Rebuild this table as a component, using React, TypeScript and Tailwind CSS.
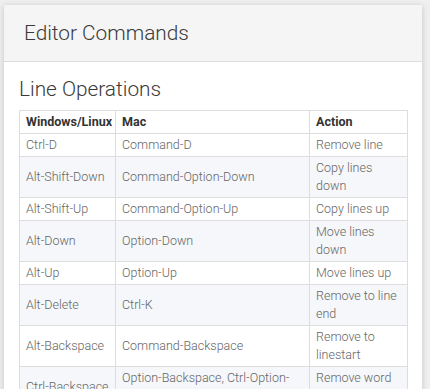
import React from "react";

const rows: [string, string, string][] = [
  ["Ctrl-D", "Command-D", "Remove line"],
  ["Alt-Shift-Down", "Command-Option-Down", "Copy lines down"],
  ["Alt-Shift-Up", "Command-Option-Up", "Copy lines up"],
  ["Alt-Down", "Option-Down", "Move lines down"],
  ["Alt-Up", "Option-Up", "Move lines up"],
  ["Alt-Delete", "Ctrl-K", "Remove to line end"],
  ["Alt-Backspace", "Command-Backspace", "Remove to linestart"],
  ["Ctrl-Backspace", "Option-Backspace, Ctrl-Option-Backspace", "Remove word left"],
  ["Ctrl-Delete", "Option-Delete", "Remove word right"],
];

export default function App() {
  return (
    <div
      className="min-h-[389px] bg-[#efefef] pt-[5px] pl-[4px] overflow-hidden"
      style={{ fontFamily: "Roboto, 'Liberation Sans', sans-serif" }}
    >
      <div className="w-[418px] bg-white shadow-[0_1px_6px_rgba(0,0,0,0.18)]">
        <div className="h-[57px] bg-[#f5f5f5] border-b border-[#dddddd] flex items-center pl-[20px]">
          <h2 className="text-[20.8px] font-light text-[#3a3a3a] leading-[28px]">Editor Commands</h2>
        </div>
        <div className="px-[15px] pt-[13px] pb-4">
          <h3 className="text-[20.8px] font-light text-[#3a3a3a] leading-[28px] mb-[7px]">Line Operations</h3>
          <table className="w-[388px] table-fixed border-collapse text-[12.5px] leading-[18px]">
            <colgroup>
              <col className="w-[96px]" />
              <col className="w-[194px]" />
              <col className="w-[98px]" />
            </colgroup>
            <thead>
              <tr>
                <th className="border border-[#dddddd] px-[6px] py-[2px] text-left font-bold text-[#333333]">Windows/Linux</th>
                <th className="border border-[#dddddd] px-[6px] py-[2px] text-left font-bold text-[#333333]">Mac</th>
                <th className="border border-[#dddddd] px-[6px] py-[2px] text-left font-bold text-[#333333]">Action</th>
              </tr>
            </thead>
            <tbody>
              {rows.map((r, i) => (
                <tr key={i} className={i % 2 === 1 ? "bg-[#f5f7fa]" : "bg-white"}>
                  {r.map((c, j) => (
                    <td key={j} className="border border-[#dddddd] px-[6px] py-[2px] font-light text-[#666666] align-middle">
                      {c}
                    </td>
                  ))}
                </tr>
              ))}
            </tbody>
          </table>
        </div>
      </div>
    </div>
  );
}
